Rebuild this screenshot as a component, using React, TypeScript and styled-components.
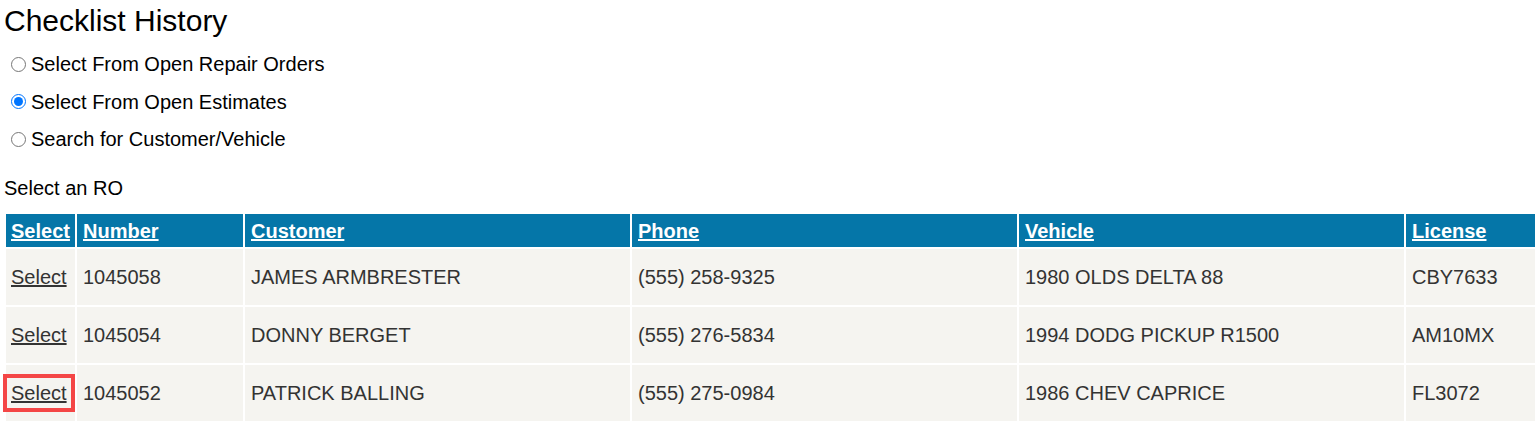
import React from "react";
import styled, { createGlobalStyle } from "styled-components";

const GlobalStyle = createGlobalStyle`
  html, body {
    margin: 0;
    padding: 0;
    overflow: hidden;
    background: #ffffff;
  }
  body {
    font-family: "Liberation Sans", Arial, sans-serif;
    color: #000;
  }
`;

const Page = styled.div`
  padding: 4px 0 0 4px;
  display: flex;
  flex-direction: column;
  align-items: flex-start;
`;

const Title = styled.h1`
  margin: 0;
  font-size: 30px;
  line-height: 34px;
  font-weight: 400;
`;

const RadioGroup = styled.div`
  margin-top: 14px;
  display: flex;
  flex-direction: column;
  gap: 13.5px;
`;

const RadioRow = styled.label`
  display: flex;
  align-items: center;
  font-size: 20px;
  line-height: 24px;
  height: 24px;
`;

const Radio = styled.input`
  width: 15px;
  height: 15px;
  margin: 0 5px 0 7px;
`;

const Caption = styled.div`
  margin-top: 25px;
  font-size: 20px;
  line-height: 24px;
`;

const Table = styled.table`
  margin-top: 12px;
  border-collapse: separate;
  border-spacing: 2px;
  table-layout: fixed;
  width: 1544px;
  font-size: 20px;
`;

const HeadCell = styled.th<{ $w: number }>`
  width: ${(p) => p.$w}px;
  height: 33px;
  padding: 0 6px;
  box-sizing: border-box;
  background: #0576a8;
  text-align: left;
  vertical-align: middle;
  line-height: 22px;
  white-space: nowrap;
  overflow: hidden;
  &:first-child {
    padding-left: 5px;
  }
`;

const HeadLink = styled.a`
  color: #ffffff;
  font-weight: 700;
  text-decoration: underline;
  cursor: pointer;
`;

const Cell = styled.td`
  height: 56px;
  padding: 0 6px;
  box-sizing: border-box;
  background: #f5f4f0;
  color: #333333;
  vertical-align: middle;
  line-height: 23px;
  white-space: nowrap;
  overflow: visible;
  &:first-child {
    padding-left: 5px;
  }
`;

const RowLink = styled.a<{ $focused?: boolean }>`
  color: #333333;
  text-decoration: underline;
  cursor: pointer;
  outline: ${(p) => (p.$focused ? "4px solid #f44646" : "none")};
  outline-offset: 4px;
`;

const columns = [
  { label: "Select", w: 69 },
  { label: "Number", w: 166 },
  { label: "Customer", w: 385 },
  { label: "Phone", w: 385 },
  { label: "Vehicle", w: 385 },
  { label: "License", w: 140 },
];

const rows = [
  ["1045058", "JAMES ARMBRESTER", "(555) 258-9325", "1980 OLDS DELTA 88", "CBY7633"],
  ["1045054", "DONNY BERGET", "(555) 276-5834", "1994 DODG PICKUP R1500", "AM10MX"],
  ["1045052", "PATRICK BALLING", "(555) 275-0984", "1986 CHEV CAPRICE", "FL3072"],
];

export default function App() {
  return (
    <>
      <GlobalStyle />
      <Page>
        <Title>Checklist History</Title>
        <RadioGroup>
          <RadioRow>
            <Radio type="radio" name="src" />
            Select From Open Repair Orders
          </RadioRow>
          <RadioRow>
            <Radio type="radio" name="src" defaultChecked />
            Select From Open Estimates
          </RadioRow>
          <RadioRow>
            <Radio type="radio" name="src" />
            Search for Customer/Vehicle
          </RadioRow>
        </RadioGroup>
        <Caption>Select an RO</Caption>
        <Table>
          <thead>
            <tr>
              {columns.map((c) => (
                <HeadCell key={c.label} $w={c.w}>
                  <HeadLink>{c.label}</HeadLink>
                </HeadCell>
              ))}
            </tr>
          </thead>
          <tbody>
            {rows.map((r, i) => (
              <tr key={r[0]}>
                <Cell>
                  <RowLink $focused={i === rows.length - 1}>Select</RowLink>
                </Cell>
                {r.map((v, j) => (
                  <Cell key={j}>{v}</Cell>
                ))}
              </tr>
            ))}
          </tbody>
        </Table>
      </Page>
    </>
  );
}
